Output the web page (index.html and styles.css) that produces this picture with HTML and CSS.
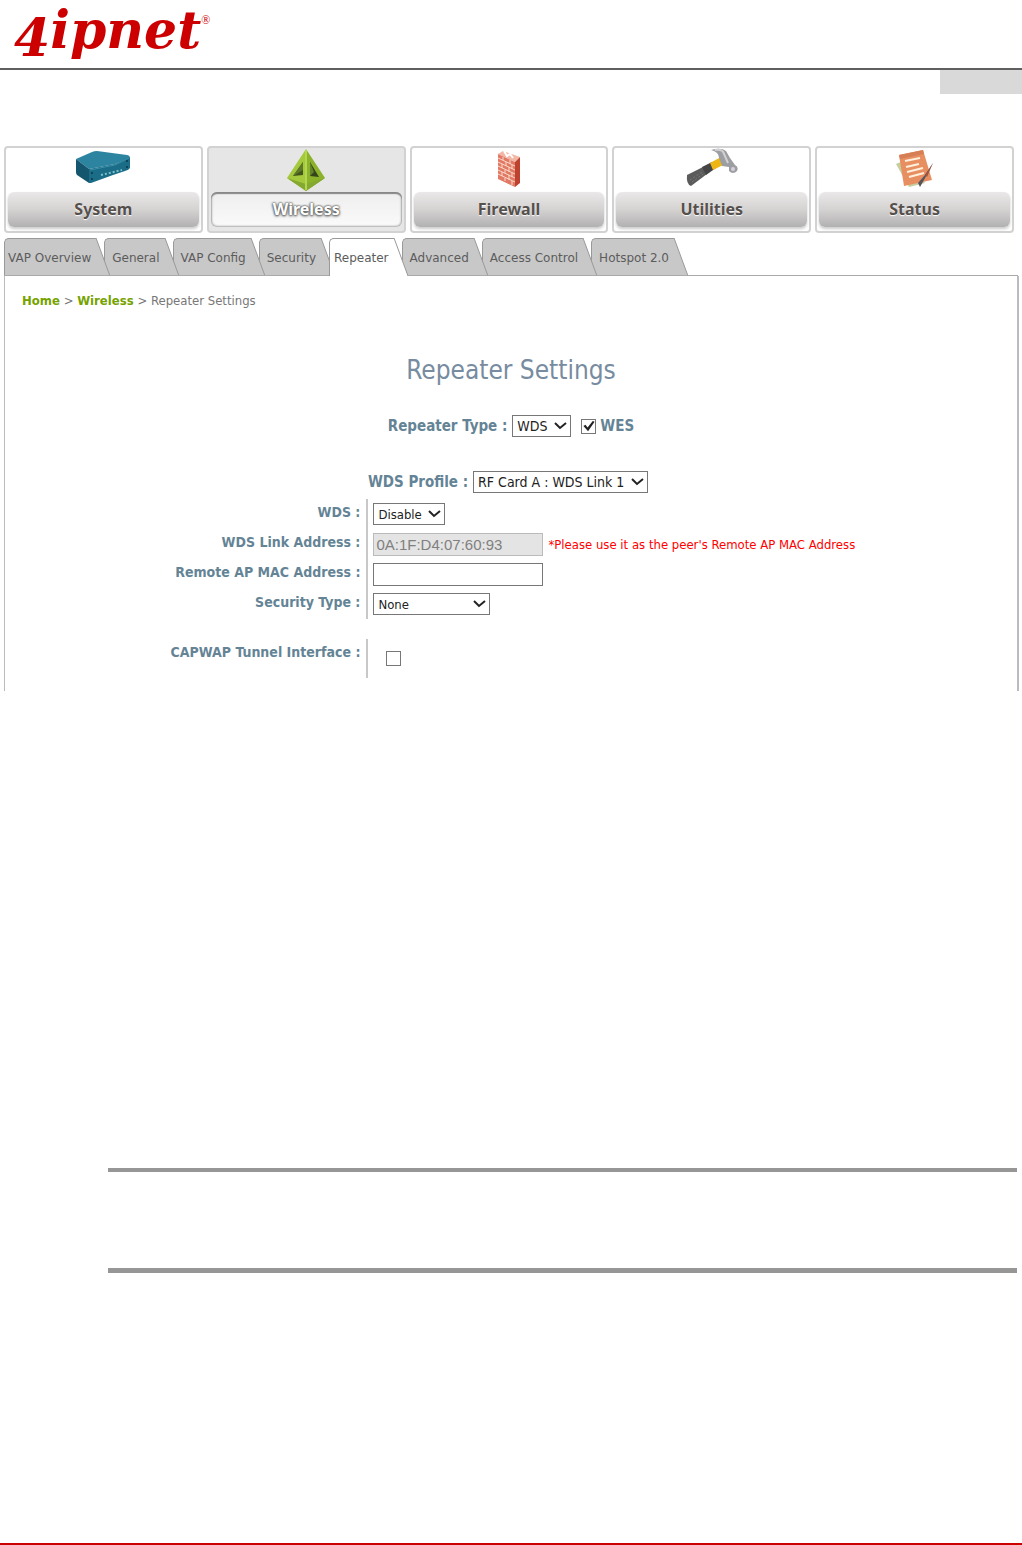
FILE: index.html
```html
<!DOCTYPE html>
<html lang="en">
  <head>
    <meta charset="utf-8">
    <title>Repeater Settings</title>
    <link rel="stylesheet" href="styles.css">
  </head>
  <body>
    <header>
      <a class="logo" href="#"><span class="numeral">4</span>ipnet<span class="reg">®</span></a>
    </header>
    <div class="marker"></div>

    <nav class="menu">
      <a href="#">
        <svg width="56" height="38" viewBox="0 0 56 38">
          <path d="M1 11 17 4 Q19 3 22 3L52 7Q56 8 54 10L40 16 14 21Z" fill="#2d84a0" />
          <path d="M1 11 14 21 14 35 2 27Q1 26 1 24Z" fill="#14566e" />
          <path d="M14 21 40 16 55 9 55 20Q54 22 50 23L38 27 16 35 14 35Z" fill="#1b6c87" />
          <path d="M15 22 40 17 54 10" fill="none" stroke="#378ea8" />
          <path d="M26 27 47 22" stroke="#7ec0c8" stroke-width="2" stroke-dasharray="2 2" />
          <circle cx="17" cy="25" r="1" fill="#08384a" /><circle cx="17" cy="31" r="1" fill="#08384a" />
          <circle cx="52" cy="13" r="1" fill="#08384a" /><circle cx="52" cy="19" r="1" fill="#08384a" />
        </svg>
        <span>System</span>
      </a>
      <a href="#" class="active">
        <svg width="40" height="44" viewBox="0 0 40 44">
          <path d="M20 1 1 30 20 43Z" fill="#a5c93c" />
          <path d="M20 1 39 30 20 43Z" fill="#8cb22c" />
          <path d="M1 30 20 36 39 30 20 43Z" fill="#85a930" />
          <path d="M17 14 17 27 7 28Z" fill="#42551c" />
          <path d="M17 14 17 22 7 28Z" fill="#5e7928" />
          <path d="M24 14 24 28 33 29Z" fill="#34451b" />
          <path d="M24 14 24 28 28 24Z" fill="#63832a" />
          <path d="M20 2V42" stroke="#b3d650" stroke-width="2" />
        </svg>
        <span>Wireless</span>
      </a>
      <a href="#">
        <svg width="24" height="40" viewBox="0 -2 24 40">
          <path d="M1 4 6 1 23 7 18 12Z" fill="#f3b7a6" />
          <path d="M1 4 18 12 18 37 1 29Z" fill="#e17a64" />
          <path d="M18 12 23 7 23 33 18 37Z" fill="#bd4330" />
          <path d="M1 8 18 16M1 12 18 20M1 16 18 24M1 20 18 28M1 24 18 32M6 7V10M13 10V14M9 12V16M15 15V19M5 14V18M12 17V22M8 20V23M15 23V27M5 22V26M12 25V30M8 28V31M15 31V35" fill="none" stroke="#fad8cb" />
          <path d="M7 1 10 6 13 4 16 8" fill="none" stroke="#fff" stroke-width="2" />
        </svg>
        <span>Firewall</span>
      </a>
      <a href="#">
        <svg width="54" height="40" viewBox="0 0 54 40">
          <path d="M2 27 18 19 22 26 6 38Q1 36 2 27Z" fill="#5b5b5b" />
          <path d="M17 19 27 14 31 20 21 27Z" fill="#454545" />
          <path d="M25 15 36 9 38 17 28 22Z" fill="#eeb613" />
          <path d="M26 2Q36-1 41 3L45 10 50 17Q54 19 52 23 48 27 44 23L44 19 37 18 34 10Q34 4 26 2Z" fill="#9d9ea1" />
          <path d="M30 2Q38 1 39 6L43 15" fill="none" stroke="#d0d1d3" stroke-width="2" />
          <circle cx="48" cy="21" r="2" fill="#d7cfe0" />
          <path d="M5 32 17 24M7 34 18 26" stroke="#777" stroke-dasharray="2 2" />
        </svg>
        <span>Utilities</span>
      </a>
      <a href="#">
        <svg width="40" height="40" viewBox="0 -1 40 40">
          <path d="M1 15 8 12 30 34 14 38Z" fill="#c7ce9d" />
          <path d="M4 6 28 1 37 31 9 37Z" fill="#e88f62" />
          <path d="M4 6 28 1 29 5 5 10Z" fill="#d67f55" />
          <path d="M10 12 25 9M11 18 24 15M12 23 28 19M14 28 29 24" stroke="#fff0dc" stroke-width="2" />
          <path d="M38 14 29 31 25 38 23 34 30 26Z" fill="#58545a" />
          <path d="M38 14 30 26 32 28Z" fill="#9b5542" />
        </svg>
        <span>Status</span>
      </a>
    </nav>

    <ul class="tabs">
      <li><a href="#">VAP Overview</a><svg width="14" height="38"><path d="M0 0 14 38H0Z" /><path class="edge" d="M0 0 14 38" /></svg></li>
      <li><a href="#">General</a><svg width="14" height="38"><path d="M0 0 14 38H0Z" /><path class="edge" d="M0 0 14 38" /></svg></li>
      <li><a href="#">VAP Config</a><svg width="14" height="38"><path d="M0 0 14 38H0Z" /><path class="edge" d="M0 0 14 38" /></svg></li>
      <li><a href="#">Security</a><svg width="14" height="38"><path d="M0 0 14 38H0Z" /><path class="edge" d="M0 0 14 38" /></svg></li>
      <li class="active"><a href="#">Repeater</a><svg width="14" height="38"><path d="M0 0 14 38H0Z" /><path class="edge" d="M0 0 14 38" /></svg></li>
      <li><a href="#">Advanced</a><svg width="14" height="38"><path d="M0 0 14 38H0Z" /><path class="edge" d="M0 0 14 38" /></svg></li>
      <li><a href="#">Access Control</a><svg width="14" height="38"><path d="M0 0 14 38H0Z" /><path class="edge" d="M0 0 14 38" /></svg></li>
      <li><a href="#">Hotspot 2.0</a><svg width="14" height="38"><path d="M0 0 14 38H0Z" /><path class="edge" d="M0 0 14 38" /></svg></li>
    </ul>

    <main class="panel">
      <p class="breadcrumb"><a href="#">Home</a> &gt; <a href="#">Wireless</a> &gt; Repeater Settings</p>
      <h1>Repeater Settings</h1>
      <form>
        <div class="line">
          <label for="type">Repeater Type :</label>
          <span class="select">
            <select id="type"><option>WDS</option></select>
            <svg width="13" height="9"><path d="M1 1 6 6 12 1" /></svg>
          </span>
          <span class="check">
            <input type="checkbox" id="wes" checked>
            <label for="wes">WES</label>
          </span>
        </div>
        <div class="line profile">
          <label for="profile">WDS Profile :</label>
          <span class="select">
            <select id="profile"><option>RF Card A : WDS Link 1</option></select>
            <svg width="13" height="9"><path d="M1 1 6 6 12 1" /></svg>
          </span>
        </div>

        <div class="row">
          <label for="wds">WDS :</label>
          <div class="field">
            <span class="select">
              <select id="wds"><option>Disable</option></select>
              <svg width="13" height="9"><path d="M1 1 6 6 12 1" /></svg>
            </span>
          </div>
        </div>
        <div class="row">
          <label for="link">WDS Link Address :</label>
          <div class="field">
            <input type="text" id="link" value="0A:1F:D4:07:60:93" disabled>
            <span class="hint">*Please use it as the peer's Remote AP MAC Address</span>
          </div>
        </div>
        <div class="row">
          <label for="remote">Remote AP MAC Address :</label>
          <div class="field"><input type="text" id="remote"></div>
        </div>
        <div class="row">
          <label for="security">Security Type :</label>
          <div class="field">
            <span class="select wide">
              <select id="security"><option>None</option></select>
              <svg width="13" height="9"><path d="M1 1 6 6 12 1" /></svg>
            </span>
          </div>
        </div>

        <div class="row tunnel">
          <label for="capwap">CAPWAP Tunnel Interface :</label>
          <div class="field"><input type="checkbox" id="capwap"></div>
        </div>
      </form>
    </main>

    <section class="note"></section>
    <footer></footer>
  </body>
</html>
```
FILE: styles.css
```css
* { box-sizing: border-box; }
body {
  margin: 0;
  min-height: 100vh;
  display: flex;
  flex-direction: column;
  background-color: #fff;
  font-family: "DejaVu Sans Condensed", "DejaVu Sans", sans-serif;
  font-size: 13px;
}
a { text-decoration: none; }

header {
  height: 70px;
  padding-left: 14px;
  border-bottom: 2px solid #5f5f5f;
}
.logo {
  display: flex;
  color: #c00;
  font: italic bold 52px/60px "DejaVu Serif", serif;
}
.numeral { padding-top: 8px; }
.reg { font: 12px/40px "Liberation Serif", serif; }
.marker {
  align-self: flex-end;
  width: 8%;
  height: 24px;
  background-color: #d9d9d9;
}

/* Main menu */
.menu {
  display: grid;
  grid-template-columns: repeat(5, 1fr);
  gap: 4px;
  margin: 52px 8px 0 4px;
}
.menu a {
  display: flex;
  flex-direction: column;
  align-items: center;
  justify-content: space-between;
  height: 87px;
  padding: 0 2px 4px;
  border: 2px solid #d2d2d2;
  border-radius: 4px;
  color: #55504c;
}
.menu span {
  width: 100%;
  border-radius: 6px;
  background: linear-gradient(#eae8e8, #d5d2d2 50%, #b2b1b1);
  box-shadow: 0 2px 3px #ccc;
  font: bold 16px/35px "Noto Sans", sans-serif;
  text-align: center;
  text-shadow: 0 1px 1px #fff;
}
.menu .active { background-color: #e6e6e6; }
.menu .active span {
  background: linear-gradient(#eee, #fafafa);
  box-shadow: inset 0 2px 1px #888, inset 0 0 2px 1px #aaa;
  color: #fff;
  text-shadow: 0 0 2px #555, 0 0 2px #555, 0 1px 3px #555;
}

/* Tabs, each one lies over the start of the next */
.tabs {
  display: flex;
  margin: 5px 4px 0;
  padding: 0;
  list-style: none;
  border-bottom: 1px solid #aaa;
}
.tabs li {
  display: flex;
  position: relative;
  margin-right: -6px;
}
.tabs li:nth-child(1) { z-index: 7; }
.tabs li:nth-child(2) { z-index: 6; }
.tabs li:nth-child(3) { z-index: 5; }
.tabs li:nth-child(4) { z-index: 4; }
.tabs li:nth-child(6) { z-index: 3; }
.tabs li:nth-child(7) { z-index: 2; }
.tabs a {
  height: 37px;
  padding: 0 5px 0 7px;
  border: solid #999;
  border-width: 1px 0 0 1px;
  border-radius: 5px 0 0 0;
  background-color: #c8c8c8;
  color: #5c5c5c;
  font: 12px/38px "DejaVu Sans", sans-serif;
}
.tabs li:first-child a { padding-left: 3px; }
.tabs svg { fill: #c8c8c8; height: 37px; }
.tabs .edge { fill: none; stroke: #999; }
.tabs .active { z-index: 8; margin-bottom: -1px; }
.tabs .active a {
  height: 38px;
  padding-left: 4px;
  background-color: #fff;
}
.tabs .active svg { fill: #fff; height: 38px; }

.panel {
  min-height: 415px;
  margin: 0 3px 0 4px;
  border: solid #bbb;
  border-width: 0 2px 0 1px;
}
.breadcrumb {
  margin: 0;
  padding: 15px 17px 0;
  color: #777;
  line-height: 20px;
}
.breadcrumb a { color: #76a300; font-weight: bold; }
h1 {
  margin: 43px 0 28px;
  color: #778ca0;
  font-size: 26px;
  font-weight: normal;
  line-height: 32px;
  text-align: center;
}

label {
  color: #648496;
  font-size: 14px;
  font-weight: bold;
}
.line {
  display: flex;
  justify-content: center;
  align-items: center;
  gap: 5px;
  height: 24px;
  font-size: 14px;
}
.line label { font-size: 15px; }
.check {
  display: flex;
  align-items: center;
  gap: 4px;
  padding-left: 5px;
}
.profile {
  margin: 32px 0 5px;
  padding-right: 6px;
}
.row {
  display: grid;
  grid-template-columns: 5fr 9fr;
  height: 30px;
}
.row label {
  padding-right: 6px;
  line-height: 26px;
  text-align: right;
}
.field {
  display: flex;
  align-items: center;
  gap: 5px;
  padding-left: 5px;
  border-left: 2px solid #c8c8c8;
}
.tunnel { height: 39px; margin-top: 20px; }
.tunnel .field { padding-left: 18px; }
.hint { color: #f00; }

/* Controls */
.select { display: inline-grid; align-items: center; }
.select select, .select svg { grid-area: 1 / 1; }
.select svg {
  justify-self: end;
  margin-right: 4px;
  fill: none;
  stroke: #222;
  stroke-width: 2;
  pointer-events: none;
}
select {
  appearance: none;
  height: 22px;
  padding: 0 22px 0 4px;
  border: 1px solid #777;
  border-radius: 0;
  background-color: #fff;
  color: #222;
  font: inherit;
}
.wide { width: 117px; }
input[type=text] {
  width: 170px;
  height: 23px;
  padding: 0 2px;
  border: 1px solid #777;
  background-color: #fff;
  font: 15px "Liberation Sans", sans-serif;
}
input[type=text]:disabled {
  border-color: #bbb;
  background-color: #e4e4e4;
  color: #808080;
}
input[type=checkbox] {
  appearance: none;
  width: 15px;
  height: 15px;
  margin: 0;
  border: 1px solid #777;
  background-color: #fff;
}
input[type=checkbox]:checked::before {
  content: "";
  display: block;
  height: 13px;
  background-color: #222;
  clip-path: polygon(8% 50%, 24% 40%, 40% 62%, 80% 12%, 94% 18%, 44% 90%);
}

.note {
  height: 105px;
  margin: 477px 5px 0 108px;
  border: solid #969696;
  border-width: 4px 0 5px;
}
footer {
  margin-top: auto;
  border-bottom: 2px solid #c00;
}
```
